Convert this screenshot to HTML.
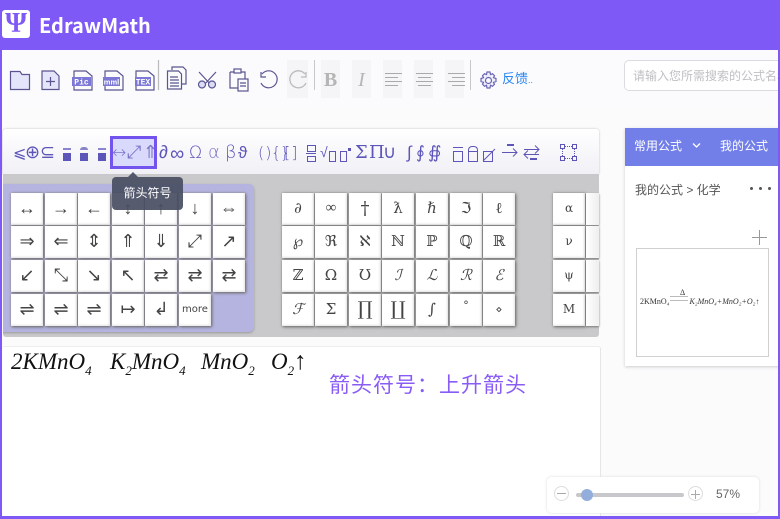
<!DOCTYPE html>
<html>
<head>
<meta charset="utf-8">
<style>
html,body{margin:0;padding:0}
body{width:780px;height:519px;overflow:hidden;position:relative;background:#fff;font-family:"Liberation Sans","Noto Sans CJK SC",sans-serif}
.a{position:absolute}
.btn{position:absolute;width:32px;height:32px;background:#fff;box-shadow:1px 1px 3px #666,0 0 2px #999,inset -1px -1px 2px #e4e4e4;text-align:center;line-height:31px;font-size:18px;color:#444;font-family:"Liberation Serif","DejaVu Sans","Noto Sans CJK SC",serif;overflow:hidden}
.s{font-family:"DejaVu Serif","Liberation Serif",serif;font-size:15px}
.tb{position:absolute;top:2px;color:#5d55b8;white-space:nowrap;font-family:"DejaVu Sans",sans-serif;line-height:44px;font-size:18px;font-weight:200}
.gb{position:absolute;top:60px;width:19px;height:38px;background:#f5f5f7}
.ln{position:absolute;height:1px;background:#aaa}
sub{font-size:13px;vertical-align:-6px;line-height:0}
</style>
</head>
<body>
<div class="a" style="left:0;top:0;width:780px;height:50px;background:#7f59f5"></div>
<div class="a" style="left:2px;top:10px;width:28px;height:28px;background:#fff;border-radius:3px;color:#7f59f5;font:bold 28px/28px 'Liberation Serif',serif;text-align:center">Ψ</div>
<div class="a" style="left:39px;top:11px;color:#fff;font:bold 20px/28px 'Noto Sans CJK SC',sans-serif;white-space:nowrap">EdrawMath</div>

<div class="a" style="left:2px;top:50px;width:776px;height:58px;background:#fbfbfe;border-bottom:1px solid #e4e4e8"></div>

<svg class="a" style="left:0;top:50px" width="340" height="58" fill="none" stroke="#5a5590" stroke-width="1.2">
<path d="M10.500 39.500V21.500H20l2 3h7.500v15z" fill="#e4e4fa"/>
<path d="M42 21h12l5 5v13.500H42z" fill="#e4e4fa"/><path d="M50.500 27v9M46 31.500h9"/>
<path d="M74 21h12l6 5v14H74z"/><rect x="72" y="27" width="19" height="9" fill="#7d77d6" stroke="none"/>
<path d="M105 21h12l6 5v14h-18z"/><rect x="103" y="27" width="17" height="9" fill="#7d77d6" stroke="none"/>
<path d="M136 21h12l6 5v14h-18z"/><rect x="135" y="27" width="16" height="9" fill="#7d77d6" stroke="none"/>
<text x="81.500" y="34.500" fill="#fff" stroke="none" text-anchor="middle" font-family="Liberation Mono,monospace" font-weight="bold" font-size="8">Pic</text>
<text x="111.500" y="34.500" fill="#fff" stroke="none" text-anchor="middle" font-family="Liberation Sans,sans-serif" font-weight="bold" font-size="7.500">mml</text>
<text x="143" y="34.500" fill="#fff" stroke="none" text-anchor="middle" font-family="Liberation Mono,monospace" font-weight="bold" font-size="8">TEX</text>
<path d="M158.500 10v30" stroke="#bbb"/>
<path d="M172 20v-3h11l3 3v14h-4"/><path d="M167.500 21h11l3 3v15h-14z" fill="#fbfbfe"/><path d="M170 27h8M170 30h9M170 33h9M170 36h9"/>
<path d="M199 22l13 14M216 22l-13 14"/><circle cx="202" cy="34.500" r="3.500" fill="#dcdcf5"/><circle cx="212" cy="34.500" r="3.500" fill="#dcdcf5"/>
<path d="M230 22h15v8M230 22v16h8"/><rect x="234" y="19" width="7" height="4" fill="#fbfbfe"/><rect x="238" y="29" width="10" height="12" fill="#fbfbfe"/><path d="M240 33h6M240 36h6"/>
<path d="M262 24a8.500 8.500 0 1 1-1 9M261 22v5h5" stroke-width="1.200"/>
</svg>
<div class="a" style="left:287px;top:60px;width:21px;height:38px;background:#f5f5f7"></div>
<svg class="a" style="left:287px;top:60px" width="22" height="38" fill="none" stroke="#bbb" stroke-width="1.300"><path d="M18 14a8.500 8.500 0 1 0 1 9M19 12v5h-5"/></svg>
<div class="a" style="left:314px;top:60px;width:1px;height:30px;background:#c8c8c8"></div>
<div class="gb" style="left:321px"></div>
<div class="a" style="left:321px;top:68px;width:19px;text-align:center;font:bold 20px/24px 'Liberation Serif',serif;color:#b5b5b5">B</div>
<div class="gb" style="left:352px"></div>
<div class="a" style="left:352px;top:68px;width:19px;text-align:center;font:italic 20px/24px 'Liberation Serif',serif;color:#b5b5b5">I</div>
<div class="gb" style="left:383px"></div>
<div class="ln" style="left:385px;top:73px;width:17px"></div><div class="ln" style="left:385px;top:77px;width:13px"></div><div class="ln" style="left:385px;top:81px;width:17px"></div><div class="ln" style="left:385px;top:85px;width:13px"></div>
<div class="gb" style="left:414px"></div>
<div class="ln" style="left:416px;top:73px;width:17px"></div><div class="ln" style="left:418px;top:77px;width:13px"></div><div class="ln" style="left:416px;top:81px;width:17px"></div><div class="ln" style="left:418px;top:85px;width:13px"></div>
<div class="gb" style="left:445px"></div>
<div class="ln" style="left:448px;top:73px;width:17px"></div><div class="ln" style="left:452px;top:77px;width:13px"></div><div class="ln" style="left:448px;top:81px;width:17px"></div><div class="ln" style="left:452px;top:85px;width:13px"></div>
<div class="a" style="left:470px;top:60px;width:1px;height:30px;background:#c8c8c8"></div>
<svg class="a" style="left:479px;top:71px" width="19" height="19" fill="none" stroke="#6a64b0" stroke-width="1.200"><path d="M8 1h3l.5 2.500 2-.8 2 2-1 2 2.500.8v3l-2.500.8 1 2-2 2-2-1-.5 2.700H8l-.5-2.700-2 1-2-2 1-2L2 10.500v-3l2.500-.8-1-2 2-2 2 .8z" fill="#eeeefc"/><circle cx="9.500" cy="9.500" r="3" fill="#fbfbfe"/></svg>
<div class="a" style="left:502px;top:70px;color:#2a86f0;font-size:13px;line-height:18px;white-space:nowrap">反馈<span style="font-size:9px">..</span></div>
<div class="a" style="left:624px;top:60px;width:170px;height:31px;border:1px solid #dcdce0;border-radius:5px;background:#fff;box-sizing:border-box;color:#c0c0c4;font-size:12px;line-height:31px;padding-left:8px;white-space:nowrap;overflow:hidden">请输入您所需搜索的公式名称</div>

<div class="a" style="left:2px;top:108px;width:776px;height:410px;background:#fbfbfc"></div>

<div class="a" style="left:3px;top:129px;width:596px;height:45px;background:linear-gradient(#fff,#f0f0f6);box-shadow:0 0 2px #bbb;border-radius:3px 3px 0 0;overflow:hidden">
<div class="a" style="left:107px;top:7px;width:47px;height:33px;box-sizing:border-box;border:3px solid #7353ee;background:#d9d9fb"></div>
<div class="tb" style="left:10px;font-size:16px">⩽</div>
<div class="tb" style="left:22px;font-size:18px">⊕</div>
<div class="tb" style="left:37px;font-size:18px">⊆</div>
<div class="a" style="left:60px;top:24px;width:8px;height:8px;background:#5d55b8"></div><div class="a" style="left:60px;top:19px;width:8px;height:2px;background:#8a84cc"></div>
<div class="a" style="left:77px;top:24px;width:8px;height:8px;background:#5d55b8"></div><div class="a" style="left:77px;top:18px;width:8px;height:3px;background:#8a84cc;border-radius:4px 4px 0 0"></div>
<div class="a" style="left:95px;top:24px;width:8px;height:8px;background:#5d55b8"></div><div class="a" style="left:95px;top:19px;width:8px;height:2px;background:#8a84cc"></div>
<div class="tb" style="left:109px;font-size:17px;color:#7b75c8">↔</div>
<div class="tb" style="left:124px;font-size:18px;color:#7b75c8">⤢</div>
<div class="tb" style="left:140px;font-size:18px;color:#7b75c8">⇑</div>
<div class="tb" style="left:156px;font-size:18px">∂</div>
<div class="tb" style="left:167px;font-size:20px;letter-spacing:-1px">∞</div>
<div class="tb" style="left:186px;font-size:17px">Ω</div>
<div class="tb" style="left:205px;font-size:18px;color:#7b75c8">α</div>
<div class="tb" style="left:222px;font-size:18px">β</div>
<div class="tb" style="left:235px;font-size:17px">ϑ</div>
<div class="tb" style="left:255px;font-size:16px;letter-spacing:1px">()</div>
<div class="tb" style="left:268px;font-size:16px;letter-spacing:-1px">{}</div>
<div class="tb" style="left:281px;font-size:16px;letter-spacing:1px">[]</div>
<div class="a" style="left:304px;top:16px;width:7px;height:5px;border:1px solid #5d55b8"></div><div class="a" style="left:303px;top:24px;width:10px;height:1px;background:#5d55b8"></div><div class="a" style="left:304px;top:27px;width:7px;height:4px;border:1px solid #5d55b8"></div>
<div class="tb" style="left:317px;font-size:14px">√</div><div class="a" style="left:326px;top:22px;width:5px;height:9px;border:1px solid #5d55b8"></div>
<div class="a" style="left:337px;top:22px;width:5px;height:9px;border:1px solid #5d55b8"></div><div class="a" style="left:345px;top:19px;width:3px;height:3px;background:#5d55b8"></div>
<div class="tb" style="left:352px;font-size:18px;font-family:'DejaVu Serif',serif">Σ</div>
<div class="tb" style="left:366px;font-size:18px;font-family:'DejaVu Serif',serif">Π</div>
<div class="tb" style="left:380px;font-size:18px">∪</div>
<div class="tb" style="left:404px;font-size:17px">∫</div>
<div class="tb" style="left:413px;font-size:17px">∮</div>
<div class="tb" style="left:425px;font-size:17px">∯</div>
<div class="a" style="left:450px;top:22px;width:8px;height:9px;border:1px solid #5d55b8"></div><div class="a" style="left:450px;top:18px;width:10px;height:1px;background:#5d55b8"></div>
<div class="a" style="left:465px;top:22px;width:8px;height:9px;border:1px solid #5d55b8"></div><div class="a" style="left:465px;top:17px;width:8px;height:4px;border:1px solid #5d55b8;border-bottom:0;border-radius:4px 4px 0 0"></div>
<div class="a" style="left:480px;top:22px;width:8px;height:9px;border:1px solid #5d55b8"></div><svg class="a" style="left:479px;top:18px" width="14" height="15"><path d="M1 14L13 2" stroke="#5d55b8"/></svg>
<svg class="a" style="left:498px;top:14px" width="42" height="18" fill="none" stroke="#5d55b8"><path d="M6 2h7" stroke-width="2"/><path d="M1 9.500h15M12 5.500l4 4-4 4"/><path d="M23 7.500h15M34 3.500l4 4-4 4" transform="translate(0 -1)"/><path d="M38 11.500H23M27 7.500l-4 4 4 4"/><path d="M29 16h7" stroke-width="2"/></svg>
<svg class="a" style="left:556px;top:14px" width="20" height="20" fill="none" stroke="#5d55b8"><rect x="1.500" y="1.500" width="4" height="4"/><rect x="13.500" y="1.500" width="4" height="4"/><rect x="1.500" y="13.500" width="4" height="4"/><rect x="13.500" y="13.500" width="4" height="4"/><path d="M6 3.500h7M6 15.500h7M3.500 6v7M15.500 6v7" stroke-dasharray="1 1"/></svg>
</div>

<div class="a" style="left:3px;top:174px;width:596px;height:163px;background:#c9c9cb;overflow:hidden;border-radius:0 0 3px 3px">
<div class="a" style="left:-3px;top:10px;width:254px;height:148px;background:#b5b4e0;border-radius:0 5px 5px 0;box-shadow:0 1px 2px #999"></div>
</div>

<div id="g" style="position:absolute;left:0;top:0">
<div class="btn" style="left:11px;top:193px">↔</div><div class="btn" style="left:45px;top:193px">→</div><div class="btn" style="left:78px;top:193px">←</div><div class="btn" style="left:112px;top:193px">↕</div><div class="btn" style="left:145px;top:193px">↑</div><div class="btn" style="left:179px;top:193px">↓</div><div class="btn" style="left:213px;top:193px">⇔</div>
<div class="btn" style="left:11px;top:226px">⇒</div><div class="btn" style="left:45px;top:226px">⇐</div><div class="btn" style="left:78px;top:226px">⇕</div><div class="btn" style="left:112px;top:226px">⇑</div><div class="btn" style="left:145px;top:226px">⇓</div><div class="btn" style="left:179px;top:226px">⤢</div><div class="btn" style="left:213px;top:226px">↗</div>
<div class="btn" style="left:11px;top:260px">↙</div><div class="btn" style="left:45px;top:260px">⤡</div><div class="btn" style="left:78px;top:260px">↘</div><div class="btn" style="left:112px;top:260px">↖</div><div class="btn" style="left:145px;top:260px">⇄</div><div class="btn" style="left:179px;top:260px">⇄</div><div class="btn" style="left:213px;top:260px">⇄</div>
<div class="btn" style="left:11px;top:294px">⇌</div><div class="btn" style="left:45px;top:294px">⇌</div><div class="btn" style="left:78px;top:294px">⇌</div><div class="btn" style="left:112px;top:294px">↦</div><div class="btn" style="left:145px;top:294px">↲</div><div class="btn" style="left:179px;top:294px;font:10px/31px 'DejaVu Sans',sans-serif">more</div>

<div class="btn s" style="left:282px;top:193px;font-style:italic">∂</div><div class="btn" style="left:315px;top:193px;font-size:15px">∞</div><div class="btn s" style="left:349px;top:193px;font-size:18px">†</div><div class="btn s" style="left:382px;top:193px">ƛ</div><div class="btn s" style="left:416px;top:193px;font-style:italic">ℏ</div><div class="btn s" style="left:450px;top:193px">ℑ</div><div class="btn s" style="left:483px;top:193px">ℓ</div>
<div class="btn s" style="left:282px;top:226px">℘</div><div class="btn s" style="left:315px;top:226px">ℜ</div><div class="btn s" style="left:349px;top:226px">ℵ</div><div class="btn s" style="left:382px;top:226px">ℕ</div><div class="btn s" style="left:416px;top:226px">ℙ</div><div class="btn s" style="left:450px;top:226px">ℚ</div><div class="btn s" style="left:483px;top:226px">ℝ</div>
<div class="btn s" style="left:282px;top:260px">ℤ</div><div class="btn s" style="left:315px;top:260px">Ω</div><div class="btn s" style="left:349px;top:260px">Ʊ</div><div class="btn s" style="left:382px;top:260px;font-style:italic">ℐ</div><div class="btn s" style="left:416px;top:260px;font-style:italic">ℒ</div><div class="btn s" style="left:450px;top:260px;font-style:italic">ℛ</div><div class="btn s" style="left:483px;top:260px;font-style:italic">ℰ</div>
<div class="btn s" style="left:282px;top:294px;font-style:italic">ℱ</div><div class="btn s" style="left:315px;top:294px">Σ</div><div class="btn s" style="left:349px;top:294px;font-size:19px">∏</div><div class="btn s" style="left:382px;top:294px;font-size:19px">∐</div><div class="btn s" style="left:416px;top:294px">∫</div><div class="btn s" style="left:450px;top:294px;font-size:11px;line-height:24px">°</div><div class="btn s" style="left:483px;top:294px;font-size:11px">⋄</div>
</div>
<div class="btn s" style="left:553px;top:193px;font-size:12px">α</div>
<div class="btn s" style="left:553px;top:226px;font-size:12px">ν</div>
<div class="btn s" style="left:553px;top:260px;font-size:12px">ψ</div>
<div class="btn s" style="left:553px;top:294px;font-size:12px">M</div>
<div class="a" style="left:586px;top:193px;width:13px;height:32px;background:linear-gradient(90deg,#fff,#eee);box-shadow:0 1px 2px #777"></div>
<div class="a" style="left:586px;top:226px;width:13px;height:32px;background:linear-gradient(90deg,#fff,#eee);box-shadow:0 1px 2px #777"></div>
<div class="a" style="left:586px;top:260px;width:13px;height:32px;background:linear-gradient(90deg,#fff,#eee);box-shadow:0 1px 2px #777"></div>
<div class="a" style="left:586px;top:294px;width:13px;height:32px;background:linear-gradient(90deg,#fff,#eee);box-shadow:0 1px 2px #777"></div>

<div class="a" style="left:112px;top:177px;width:71px;height:33px;background:rgba(72,78,98,.92);border-radius:4px;color:#fff;font-size:12px;line-height:33px;text-align:center">箭头符号</div>
<div class="a" style="left:128px;top:172px;width:0;height:0;border-left:5px solid transparent;border-right:5px solid transparent;border-bottom:5px solid rgba(72,78,98,.92)"></div>

<div class="a" style="left:2px;top:346px;width:598px;height:172px;background:#fff;border-top:1px solid #eee;border-right:1px solid #e6e6e6;border-radius:3px"></div>
<div class="a" style="left:11px;top:349px;font:italic 23px/26px 'Liberation Serif',serif;color:#111;white-space:nowrap">2KMnO<sub>4</sub></div>
<div class="a" style="left:110px;top:349px;font:italic 23px/26px 'Liberation Serif',serif;color:#111;white-space:nowrap">K<sub>2</sub>MnO<sub>4</sub></div>
<div class="a" style="left:201px;top:349px;font:italic 23px/26px 'Liberation Serif',serif;color:#111;white-space:nowrap">MnO<sub>2</sub></div>
<div class="a" style="left:271px;top:349px;font:italic 23px/26px 'Liberation Serif',serif;color:#111;white-space:nowrap">O<sub>2</sub><span style="font-style:normal;font-size:25px">↑</span></div>
<div class="a" style="left:329px;top:373px;color:#8a5cf6;font-size:21px;line-height:26px;letter-spacing:1px;white-space:nowrap">箭头符号：上升箭头</div>

<div class="a" style="left:625px;top:128px;width:155px;height:238px;background:#fff;box-shadow:0 1px 3px #ccc"></div>
<div class="a" style="left:625px;top:128px;width:155px;height:38px;background:#727fe8"></div>
<div class="a" style="left:634px;top:137px;color:#fff;font-size:12px;line-height:18px;white-space:nowrap">常用公式</div>
<svg class="a" style="left:692px;top:142px" width="10" height="8" fill="none" stroke="#fff" stroke-width="1.300"><path d="M1 1.500l3.500 3.500 3.500-3.500"/></svg>
<div class="a" style="left:720px;top:137px;color:#fff;font-size:12px;line-height:18px;white-space:nowrap">我的公式</div>
<div class="a" style="left:635px;top:181px;color:#555;font-size:12px;line-height:18px;white-space:nowrap">我的公式 &gt; 化学</div>
<div class="a" style="left:750px;top:187px;width:3px;height:3px;border-radius:50%;background:#555;box-shadow:9px 0 #555,18px 0 #555"></div>
<div class="a" style="left:752px;top:237px;width:15px;height:1px;background:#999"></div>
<div class="a" style="left:759px;top:230px;width:1px;height:15px;background:#999"></div>
<div class="a" style="left:636px;top:248px;width:133px;height:109px;box-sizing:border-box;border:1px solid #d0d0d0;background:#fff"></div>
<div class="a" style="left:640px;top:296px;font:italic 8px/12px 'Liberation Serif',serif;color:#333;white-space:nowrap"><span style="font-style:normal">2KMnO₄</span><span style="display:inline-block;width:18px;height:3px;border-top:1px solid #bbb;border-bottom:1px solid #bbb;vertical-align:3px;margin:0 1px"></span>K₂MnO₄+MnO₂+O₂↑</div>
<div class="a" style="left:680px;top:288px;font:8px/10px 'Liberation Serif',serif;color:#333">Δ</div>

<div class="a" style="left:547px;top:477px;width:212px;height:36px;background:#fff;border-radius:5px;box-shadow:0 0 3px #ddd"></div>
<div class="a" style="left:554px;top:486px;width:15px;height:15px;border:1px solid #ddd;border-radius:50%;box-sizing:border-box"></div>
<div class="a" style="left:557px;top:493px;width:9px;height:1px;background:#aaa"></div>
<div class="a" style="left:576px;top:493px;width:108px;height:4px;background:#c8c8cc;border-radius:2px"></div>
<div class="a" style="left:581px;top:489px;width:12px;height:12px;background:#93aedc;border-radius:50%"></div>
<div class="a" style="left:688px;top:486px;width:15px;height:15px;border:1px solid #ddd;border-radius:50%;box-sizing:border-box"></div>
<div class="a" style="left:691px;top:494px;width:9px;height:1px;background:#aaa"></div>
<div class="a" style="left:695px;top:490px;width:1px;height:9px;background:#aaa"></div>
<div class="a" style="left:716px;top:486px;color:#666;font-size:12px;line-height:16px">57%</div>

<div class="a" style="left:0;top:50px;width:2px;height:469px;background:#7f59f5"></div>
<div class="a" style="left:778px;top:50px;width:2px;height:469px;background:#7f59f5"></div>
<div class="a" style="left:0;top:516px;width:780px;height:3px;background:#7f59f5"></div>
</body>
</html>
